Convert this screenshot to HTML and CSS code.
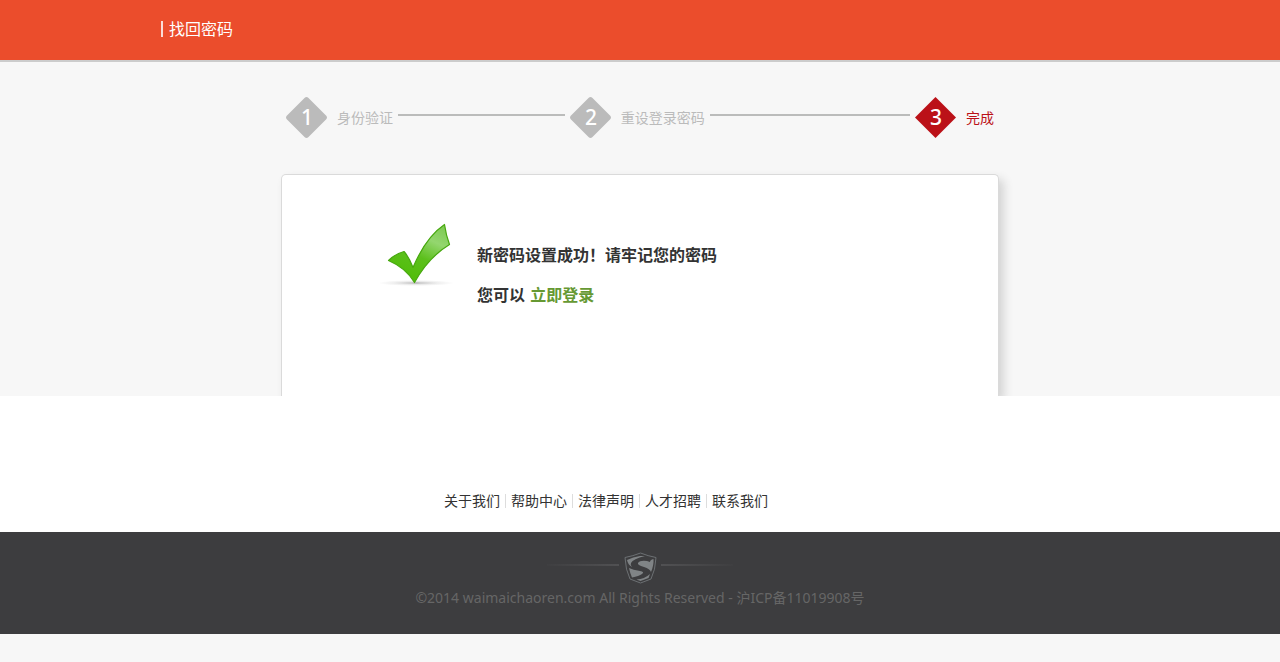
FILE: index.html
```
<!DOCTYPE html>
<html lang="zh-CN">
<head>
  <meta charset="UTF-8" />
  <meta name="viewport" content="width=device-width, initial-scale=1" />
  <title>找回密码</title>
  <link rel="stylesheet" href="styles.css">
</head>
<body>
  <header class="header">
    <div class="header-inner">
      <h1 class="header-title">找回密码</h1>
    </div>
  </header>

  <main class="main">
    <ol class="steps">
      <li class="step">
        <svg class="step-icon" viewBox="0 0 41 41" aria-hidden="true"><path d="M18.5 1Q20.5-1 22.5 1L40 18.5Q42 20.5 40 22.5L22.5 40Q20.5 42 18.5 40L1 22.5Q-1 20.5 1 18.5Z"/><text x="21" y="28">1</text></svg>
        <span>身份验证</span>
      </li>
      <li class="step-line" role="presentation"></li>
      <li class="step">
        <svg class="step-icon" viewBox="0 0 41 41" aria-hidden="true"><path d="M18.5 1Q20.5-1 22.5 1L40 18.5Q42 20.5 40 22.5L22.5 40Q20.5 42 18.5 40L1 22.5Q-1 20.5 1 18.5Z"/><text x="21" y="28">2</text></svg>
        <span>重设登录密码</span>
      </li>
      <li class="step-line step-line-long" role="presentation"></li>
      <li class="step step-current" aria-current="step">
        <svg class="step-icon" viewBox="0 0 41 41" aria-hidden="true"><path d="M20.5 0L41 20.5L20.5 41L0 20.5Z"/><text x="21" y="28">3</text></svg>
        <span>完成</span>
      </li>
    </ol>

    <section class="card">
      <svg class="card-icon" viewBox="0 0 76 66" aria-hidden="true">
        <defs>
          <linearGradient id="tick" x1="0.9" y1="0" x2="0.4" y2="1">
            <stop offset="0" stop-color="#7cc950"/>
            <stop offset="0.3" stop-color="#94d66f"/>
            <stop offset="0.6" stop-color="#5cc01c"/>
            <stop offset="1" stop-color="#50bd08"/>
          </linearGradient>
          <radialGradient id="shade">
            <stop offset="0" stop-color="#333" stop-opacity="0.75"/>
            <stop offset="0.2" stop-color="#777" stop-opacity="0.35"/>
            <stop offset="0.6" stop-color="#999" stop-opacity="0.15"/>
            <stop offset="1" stop-color="#999" stop-opacity="0"/>
          </radialGradient>
        </defs>
        <ellipse cx="36" cy="61" rx="38" ry="3" fill="url(#shade)"/>
        <path d="M8.500 38.500Q15 32 24 29.500Q29 35 33 45.500C40 29 49 13 64.500 2.500Q66 13 69.500 22.500C54 32 43 45 34.500 60.500Q26 46 8.500 38.500Z" fill="url(#tick)" stroke="#47a80f" stroke-width="1.200" stroke-linejoin="round"/>
      </svg>
      <div class="card-text">
        <p>新密码设置成功！请牢记您的密码</p>
        <p>您可以 <a href="#" class="login-link">立即登录</a></p>
      </div>
    </section>
  </main>

  <nav class="links" aria-label="网站信息">
    <a href="#">关于我们</a>
    <a href="#">帮助中心</a>
    <a href="#">法律声明</a>
    <a href="#">人才招聘</a>
    <a href="#">联系我们</a>
  </nav>

  <footer class="footer">
    <div class="footer-brand">
      <span class="footer-line"></span>
      <svg class="footer-logo" viewBox="0 0 34 32" aria-hidden="true">
        <path d="M17.500 1Q25 4 33 5.500Q32.500 18 28 27L17.500 31L7 27Q2.500 18 2 5.500Q10 4 17.500 1Z" fill="none" stroke="#6c7073"/>
        <path d="M4 8Q10 5 17 4L22 4Q10 7 8 11Q7 13 9 15Q5 13 4 8Z" fill="#808486"/>
        <path d="M30.500 7Q31 13 28 20Q27 17 21 15Q14 13 15 11Q17 8 24 9L27 10Q27 8 30.500 7Z" fill="#808486"/>
        <path d="M6 16Q10 18 17 19Q22 20 19 22Q16 24 9 25.500Q7 21 6 16Z" fill="#808486"/>
        <path d="M27 22L25.500 26L17.500 29L13.500 27.500Q21.500 27 27 22Z" fill="#808486"/>
      </svg>
      <span class="footer-line footer-line-right"></span>
    </div>
    <p>©2014 waimaichaoren.com All Rights Reserved - 沪ICP备11019908号</p>
  </footer>
</body>
</html>
```
FILE: styles.css
```
*, *::before, *::after { box-sizing: border-box; }

body {
  margin: 0;
  background: #f7f7f7;
  color: #333;
  font-family: "Noto Sans", "Noto Sans CJK SC", sans-serif;
  font-size: 14px;
  line-height: 20px;
}
h1, p, ol {
  margin: 0;
  padding: 0;
}
a {
  color: inherit;
  text-decoration: none;
}
a:hover { text-decoration: underline; }

.header {
  background: #eb4d2c;
  border-bottom: 2px solid #ccc;
}
.header-inner {
  display: flex;
  align-items: center;
  max-width: 960px;
  height: 60px;
  margin: 0 auto;
  padding: 0 1px 2px;
}
.header-title {
  padding-left: 6px;
  border-left: 2px solid #fbdcd6;
  color: #fff;
  font-size: 16px;
  font-weight: 400;
  line-height: 16px;
}

/* clips the card shadow at the bottom edge */
.main {
  padding-top: 35px;
  overflow: hidden;
}
.steps {
  display: flex;
  align-items: center;
  gap: 5px;
  max-width: 718px;
  margin: 0 auto;
  padding: 0 5px;
  color: #bbb;
  list-style: none;
}
.step {
  display: flex;
  align-items: center;
  gap: 10px;
}
.step-icon {
  width: 41px;
  height: 41px;
  fill: currentColor;
}
.step-icon text {
  fill: #fff;
  font-size: 21px;
  font-weight: 500;
  text-anchor: middle;
}
.step-current { color: #bb1118; }
.step-line {
  flex: 5 1 0;
  height: 2px;
  margin-bottom: 5px;
  background: #bbbcbb;
}
.step-line-long { flex-grow: 6; }

.card {
  display: flex;
  align-items: flex-start;
  gap: 21px;
  max-width: 718px;
  margin: 36px auto 0;
  padding: 47px 98px 81px;
  background: #fff;
  border: 1px solid #dadada;
  border-bottom: 0;
  border-radius: 5px 5px 0 0;
  box-shadow: 5px 5px 10px #d4d4d4;
}
.card-icon {
  width: 76px;
  height: 66px;
}
.card-text {
  padding-top: 13px;
  font-size: 16px;
  font-weight: 700;
  line-height: 40px;
}
.login-link {
  margin-left: 1px;
  color: #693;
}

.links {
  display: flex;
  justify-content: center;
  padding: 95px 68px 21px 0;
  background: #fff;
}
.links a {
  display: flex;
  align-items: center;
}
.links a + a::before {
  content: '';
  width: 1px;
  height: 14px;
  margin: 0 5px;
  background: #ddd;
}

.footer {
  padding: 20px 0 26px;
  background: #3d3d3f;
  color: #666;
  text-align: center;
}
.footer-brand {
  display: flex;
  justify-content: center;
  gap: 4px;
  margin-bottom: 4px;
}
.footer-logo {
  width: 34px;
  height: 32px;
}
.footer-line {
  width: 72px;
  height: 2px;
  margin-top: 12px;
  background: linear-gradient(to right, #3f3f41, #515153);
}
.footer-line-right { background: linear-gradient(to left, #3f3f41, #515153); }
```
